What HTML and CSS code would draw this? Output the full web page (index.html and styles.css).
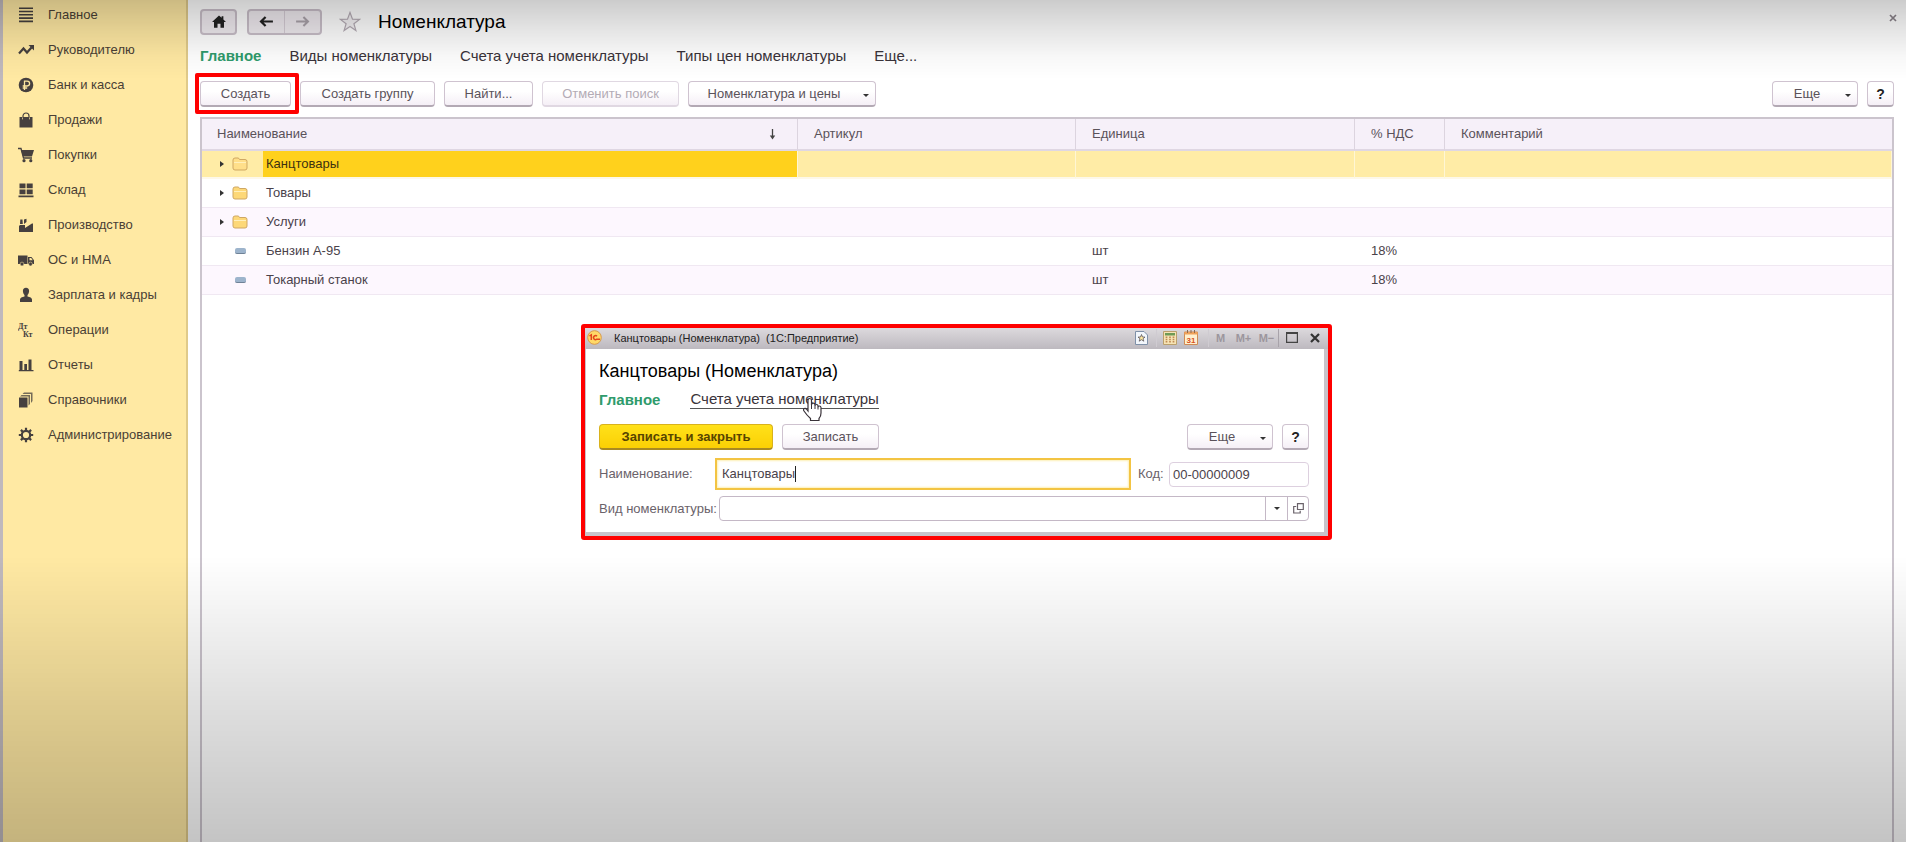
FILE: index.html
```html
<!DOCTYPE html>
<html lang="ru">
<head>
<meta charset="utf-8">
<title>Номенклатура</title>
<link rel="stylesheet" href="styles.css">
</head>
<body>
<div class="app">
  <nav class="sidebar" aria-label="Разделы">
    <a class="section" href="#"><svg class="section-icon" viewBox="0 0 16 16"><path d="M1 1.200h14M1 4.500h14M1 7.800h14M1 11.100h14M1 14.400h14" stroke="currentColor" stroke-width="1.600"/></svg>Главное</a>
    <a class="section" href="#"><svg class="section-icon" viewBox="0 0 16 16"><path d="M1 11.500 5.500 6.500l3.500 4 4.500-5" fill="none" stroke="currentColor" stroke-width="2.200"/><path d="M10.500 3H16v5.500z" fill="currentColor"/></svg>Руководителю</a>
    <a class="section" href="#"><svg class="section-icon" viewBox="0 0 16 16"><circle cx="8" cy="8" r="7.300" fill="currentColor"/><path d="M6.500 13V4.200h2.700a2.300 2.300 0 0 1 0 4.800H4.700M4.700 11h4.500" fill="none" stroke="#fde7a0" stroke-width="1.300"/></svg>Банк и касса</a>
    <a class="section" href="#"><svg class="section-icon" viewBox="0 0 16 16"><path d="M1.500 5H4v2.200h1V5h6v2.200h1V5h2.500v10.500h-13z" fill="currentColor"/><path d="M5 6.500V4a3 3 0 0 1 6 0v2.500" fill="none" stroke="currentColor" stroke-width="1.200"/></svg>Продажи</a>
    <a class="section" href="#"><svg class="section-icon" viewBox="0 0 16 16"><path d="M0 1.500h3L5.500 11H14" fill="none" stroke="currentColor" stroke-width="1.300"/><path d="M3 3h13l-2 6.500H5z" fill="currentColor"/><circle cx="6" cy="13.700" r="1.600" fill="currentColor"/><circle cx="12.800" cy="13.700" r="1.600" fill="currentColor"/></svg>Покупки</a>
    <a class="section" href="#"><svg class="section-icon" viewBox="0 0 16 16"><path d="M1.500 1.500h6v4.800h-6zM8.700 1.500h6v4.800h-6zM1.500 7.400h6v4.800h-6zM8.700 7.400h6v4.800h-6zM.5 13.500h15v1.700H.5z" fill="currentColor"/></svg>Склад</a>
    <a class="section" href="#"><svg class="section-icon" viewBox="0 0 16 16"><path d="M1 15V9l1-1h5v3l7-4.500h1V15zM2 7l.3-4.500h2.200L4.800 7zM6 7V2.500l2.500-.8V5z" fill="currentColor"/></svg>Производство</a>
    <a class="section" href="#"><svg class="section-icon" viewBox="0 0 16 16"><path d="M0 3.500h9.500V12H0zM10 5h3.500L16 8.200V12h-6z" fill="currentColor"/><path d="M11.500 6h1.700l1.500 2.200h-3.200z" fill="#fde7a0"/><circle cx="4" cy="12" r="1.900" fill="currentColor" stroke="#fde7a0" stroke-width=".5"/><circle cx="12.500" cy="12" r="1.900" fill="currentColor" stroke="#fde7a0" stroke-width=".5"/></svg>ОС и НМА</a>
    <a class="section" href="#"><svg class="section-icon" viewBox="0 0 16 16"><path d="M8 .8c2 0 3.300 1.400 3.100 3.400C11 6 10 7.500 9.500 8v1.500c2.500.5 4.500 1.300 4.500 3V15H2v-2.500c0-1.700 2-2.500 4.500-3V8C6 7.500 5 6 4.900 4.200 4.700 2.200 6 .8 8 .8z" fill="currentColor"/></svg>Зарплата и кадры</a>
    <a class="section" href="#"><svg class="section-icon" viewBox="0 0 16 16"><text class="icon-letters" x="0" y="7">Дт</text><text class="icon-letters" x="5" y="15">Кт</text></svg>Операции</a>
    <a class="section" href="#"><svg class="section-icon" viewBox="0 0 16 16"><path d="M1.500 4h3v9h-3zM6.300 7h2.700v6H6.300zM10.500 2.500h3V13h-3zM.8 13H15.500v1.300H.8z" fill="currentColor"/></svg>Отчеты</a>
    <a class="section" href="#"><svg class="section-icon" viewBox="0 0 16 16"><path d="M1 5.500h8.500v10H1z" fill="currentColor"/><path d="M2 4.500 3.500 3H12v9l-1.500 1.500V4.500zM4.500 2 6 .5h8.500V9L13 11V2z" fill="currentColor" opacity=".75"/></svg>Справочники</a>
    <a class="section" href="#"><svg class="section-icon" viewBox="0 0 16 16"><circle cx="8" cy="8" r="4.200" fill="none" stroke="currentColor" stroke-width="2.200"/><path d="M8 .8v3M8 12.200v3M.8 8h3M12.200 8h3M2.900 2.900 5 5M11 11l2.100 2.100M2.900 13.100 5 11M11 5l2.100-2.100" stroke="currentColor" stroke-width="2.200"/></svg>Администрирование</a>
  </nav>

  <main class="page">
    <header class="page-head">
      <button class="tool home" aria-label="Начальная страница"><svg width="14" height="13" viewBox="0 0 16 14"><path d="M8 0 0 7.500h2.300V14h4V9.500h3.400V14h4V7.500H16L13 4.700V1h-2v1.800z" fill="#222"/></svg></button>
      <div class="history">
        <button aria-label="Назад"><svg width="15" height="11" viewBox="0 0 16 12"><path d="M15 6H3M7 1 2 6l5 5" fill="none" stroke="#222" stroke-width="2.400"/></svg></button>
        <button aria-label="Вперед" disabled><svg width="15" height="11" viewBox="0 0 16 12"><path d="M1 6h12M9 1l5 5-5 5" fill="none" stroke="#aaa2aa" stroke-width="2.200"/></svg></button>
      </div>
      <button class="favorite" aria-label="В избранное"><svg width="22" height="21" viewBox="0 0 22 21"><path d="m11 1.500 2.500 6.700 7 .2-5.600 4.300 2 6.800L11 15.500l-5.900 4 2-6.800L1.500 8.400l7-.2z" fill="#f4f2f4" stroke="#b5acb5" stroke-width="1.200"/></svg></button>
      <h1>Номенклатура</h1>
      <button class="close-page" aria-label="Закрыть"><svg width="8" height="8" viewBox="0 0 8 8"><path d="m1 1 6 6M7 1 1 7" stroke="#8b838b" stroke-width="1.700"/></svg></button>
    </header>

    <nav class="tabs" aria-label="Связанные списки">
      <a class="current" href="#">Главное</a>
      <a href="#">Виды номенклатуры</a>
      <a href="#">Счета учета номенклатуры</a>
      <a href="#">Типы цен номенклатуры</a>
      <a href="#">Еще...</a>
    </nav>

    <div class="toolbar">
      <span class="marked"><button class="btn w-create">Создать</button></span>
      <button class="btn w-group">Создать группу</button>
      <button class="btn w-find">Найти...</button>
      <button class="btn w-cancel" disabled>Отменить поиск</button>
      <button class="btn menu w-prices">Номенклатура и цены</button>
      <button class="btn menu more push">Еще</button>
      <button class="btn help" aria-label="Справка">?</button>
    </div>

    <div class="list">
      <table>
        <colgroup><col class="c-name"><col class="c-article"><col class="c-unit"><col class="c-vat"><col></colgroup>
        <thead>
          <tr><th><span class="sorted">Наименование<svg width="7" height="11" viewBox="0 0 7 11"><path d="M3.500 0v8" stroke="#444" stroke-width="1.300"/><path d="M.8 6.500h5.400L3.500 10.500z" fill="#444"/></svg></span></th><th>Артикул</th><th>Единица</th><th>% НДС</th><th>Комментарий</th></tr>
        </thead>
        <tbody>
          <tr class="selected"><td><span class="item"><i class="arrow"></i><svg class="folder" viewBox="0 0 16 14"><path d="M1 3q0-2 2-2h3q1 0 1.500 1.500H13q2 0 2 2V11q0 2-2 2H3q-2 0-2-2z" fill="#ffdf8a" stroke="#cfa763"/><path d="M2 5.500h12" stroke="#fff0bd"/></svg><span class="label">Канцтовары</span></span></td><td></td><td></td><td></td><td></td></tr>
          <tr><td><span class="item"><i class="arrow"></i><svg class="folder" viewBox="0 0 16 14"><path d="M1 3q0-2 2-2h3q1 0 1.500 1.500H13q2 0 2 2V11q0 2-2 2H3q-2 0-2-2z" fill="#fdd878" stroke="#cfa763"/><path d="M2 5.500h12" stroke="#fff0bd"/></svg><span class="label">Товары</span></span></td><td></td><td></td><td></td><td></td></tr>
          <tr><td><span class="item"><i class="arrow"></i><svg class="folder" viewBox="0 0 16 14"><path d="M1 3q0-2 2-2h3q1 0 1.500 1.500H13q2 0 2 2V11q0 2-2 2H3q-2 0-2-2z" fill="#fdd878" stroke="#cfa763"/><path d="M2 5.500h12" stroke="#fff0bd"/></svg><span class="label">Услуги</span></span></td><td></td><td></td><td></td><td></td></tr>
          <tr><td><span class="item"><i class="dash"></i><span class="label">Бензин А-95</span></span></td><td></td><td>шт</td><td>18%</td><td></td></tr>
          <tr><td><span class="item"><i class="dash"></i><span class="label">Токарный станок</span></span></td><td></td><td>шт</td><td>18%</td><td></td></tr>
        </tbody>
      </table>
    </div>
  </main>
</div>

<div class="shade"></div>

<section class="dialog" role="dialog" aria-labelledby="dialog-title">
  <div class="titlebar">
    <svg class="logo" width="15" height="15" viewBox="0 0 15 15"><circle cx="7.500" cy="7.500" r="6.800" fill="#ffd968" stroke="#d99a4a"/><path d="m2.500 6 1.800-1.200V10M10 6.200a2 2 0 1 0-.2 3H13" fill="none" stroke="#e2451c" stroke-width="1.500"/></svg>
    <span class="caption">Канцтовары (Номенклатура)&nbsp; (1С:Предприятие)</span>
    <div class="tools">
      <button class="t-fav" aria-label="Избранное"><svg width="13" height="14" viewBox="0 0 13 14"><path d="M.5.5H9L12.500 4v9.500H.5z" fill="#f2f6fb" stroke="#7f90a8"/><path d="m6.500 3.500 1 2.500 2.500.1-2 1.600.8 2.500-2.300-1.500-2.300 1.500.8-2.500-2-1.600L5.500 6z" fill="#ffe9a0" stroke="#5b5560" stroke-width=".8"/></svg></button>
      <button class="t-calc" aria-label="Калькулятор"><svg width="14" height="14" viewBox="0 0 14 14"><path d="M.5.5h13v13H.5z" fill="#f6e3b4" stroke="#bba06c"/><path d="M2 2h10v2.500H2z" fill="#6f9a55"/><path d="M3.500 5.500V12M7 5.500V12M10.500 5.500V12" stroke="#c08a55" stroke-width="1.700" stroke-dasharray="1.600 .6"/></svg></button>
      <button class="t-date" aria-label="Календарь"><svg width="14" height="15" viewBox="0 0 14 15"><path d="M.5 2h13v12.500H.5z" fill="#fff0cf" stroke="#d08b55"/><path d="M.5 2h13v2.500H.5z" fill="#f0a25b"/><path d="M3.500 0v3M7 0v3M10.500 0v3" stroke="#8d6a50"/><text class="day" x="7" y="13" text-anchor="middle">31</text></svg></button>
      <button class="mem" disabled>M</button><button class="mem" disabled>M+</button><button class="mem" disabled>M−</button>
      <button class="t-max" aria-label="Развернуть"><svg width="12" height="11" viewBox="0 0 12 11"><path d="M.6 1h10.800v9.400H.6z" fill="none" stroke="#444" stroke-width="1.200"/><path d="M0 1h12" stroke="#444" stroke-width="2"/></svg></button>
      <button class="t-close" aria-label="Закрыть"><svg width="10" height="10" viewBox="0 0 10 10"><path d="m1 1 8 8M9 1 1 9" stroke="#333" stroke-width="2.200"/></svg></button>
    </div>
  </div>
  <form class="dialog-body">
    <h2 id="dialog-title">Канцтовары (Номенклатура)</h2>
    <nav class="tabs" aria-label="Разделы карточки">
      <a class="current" href="#">Главное</a>
      <a class="hovered" href="#">Счета учета номенклатуры</a>
    </nav>
    <div class="toolbar">
      <button type="button" class="btn primary">Записать и закрыть</button>
      <button type="button" class="btn w-write">Записать</button>
      <button type="button" class="btn menu more push">Еще</button>
      <button type="button" class="btn help" aria-label="Справка">?</button>
    </div>
    <div class="field-row">
      <label class="l-name" for="name">Наименование:</label>
      <div class="focused"><input id="name" type="text" value="Канцтовары"><i class="caret"></i></div>
      <label class="l-code" for="code">Код:</label>
      <input class="code" id="code" type="text" value="00-00000009">
    </div>
    <div class="field-row">
      <label class="l-kind" for="kind">Вид номенклатуры:</label>
      <div class="combo">
        <select id="kind"><option></option></select>
        <button type="button" aria-label="Открыть"><svg width="11" height="11" viewBox="0 0 11 11"><path d="M4.500.7h5.800v5.800H4.500zM3.200 3.500H.7v6.500h6.500V7.800" fill="none" stroke="#6a626a" stroke-width="1.200"/></svg></button>
      </div>
    </div>
  </form>
  <svg class="pointer" width="22" height="26" viewBox="0 0 22 26"><path d="M6 3.500q0-2 1.700-2t1.800 2V8q0-1.800 1.700-1.800T13 8v1q0-1.500 1.500-1.500T16 9v1.200q0-1.200 1.400-1.200T19 10.500V16q0 3.500-2 5.500v2H8.500v-2Q5 18.500 2 14q-1-1.800.3-2.500 1.300-.6 2.500 1L6 14z" fill="#fff" stroke="#3a333a" stroke-width="1.200"/><path d="M9.500 8v4M13 9v3M16 10v2.500" stroke="#3a333a"/></svg>
</section>
</body>
</html>
```

FILE: styles.css
```css
* { box-sizing: border-box; }

body {
  margin: 0;
  background: #fff;
  color: #4a424a;
  font-family: "Liberation Sans", Arial, sans-serif;
  font-size: 13px;
  line-height: 16px;
}

button, input, select { font: inherit; color: inherit; }
button { padding: 0; border: 0; background: none; }
a { color: inherit; text-decoration: none; }
svg { flex: none; }

.app { display: flex; min-height: 100vh; }

/* Sections panel */
.sidebar {
  flex: none;
  display: flex;
  flex-direction: column;
  gap: 15px;
  width: 188px;
  padding: 5px 0 0 15px;
  background: #ffe9a3;
  border-left: 3px solid #c0b9bd;
  border-right: 2px solid #e0ca8a;
  color: #4a3f35;
}
.section { display: flex; align-items: center; gap: 14px; height: 20px; }
.section-icon { width: 16px; height: 16px; color: #46403f; }
.icon-letters { font: bold 8px "Liberation Serif", serif; fill: currentColor; }

/* Page */
.page { flex: 1; min-width: 0; display: flex; flex-direction: column; padding: 8px 12px 0 12px; }
.page-head { display: flex; align-items: center; height: 27px; }
.page-head h1 { margin: 0 auto 0 17px; color: #000; font-size: 19px; font-weight: normal; line-height: 24px; }
.tool, .history {
  height: 26px;
  border: 2px solid #c9bfc9;
  border-radius: 4px;
  background: #f0ebf0;
}
.tool, .history, .history button { display: flex; align-items: center; justify-content: center; }
.home { width: 37px; }
.history { width: 75px; margin-left: 10px; }
.history button { flex: 1; height: 100%; }
.history button + button { border-left: 1px solid #d5ccd5; }
.favorite { display: flex; margin-left: 17px; }
.close-page { display: flex; align-self: flex-start; padding: 6px 0 0; margin-right: -3px; }

.tabs { display: flex; gap: 28px; color: #3a333a; font-size: 15px; line-height: 18px; }
.page > .tabs { margin-top: 12px; }
.tabs .current { color: #2f9b6c; font-weight: bold; }
.tabs .hovered { border-bottom: 1px solid #555; line-height: 16px; }

.toolbar { display: flex; gap: 9px; }
.page > .toolbar { margin-top: 16px; }
.push { margin-left: auto; }
.btn {
  height: 26px;
  border: 1px solid #cfc3d0;
  border-bottom: 2px solid #b3a9b4;
  border-radius: 4px;
  background: linear-gradient(#fff 40%, #f5eff6);
  color: #5a525a;
}
.btn:disabled { color: #b3abb5; border-color: #e0d8e2; }
.w-create { width: 91px; }
.w-group { width: 135px; }
.w-find { width: 89px; }
.w-cancel { width: 137px; }
.w-prices { width: 188px; }
.w-write { width: 97px; }
.more { width: 86px; }
.help { width: 27px; color: #222; font-weight: bold; font-size: 14px; }
.menu { display: flex; align-items: center; justify-content: center; position: relative; padding-right: 16px; }
.menu::after {
  content: "";
  position: absolute;
  right: 6px;
  top: 12px;
  border: 3px solid transparent;
  border-top-color: #333;
  border-bottom: 0;
}
.marked { position: relative; display: flex; }
.marked::after {
  content: "";
  position: absolute;
  inset: -8px -8px -7px -5px;
  border: 4px solid #f00;
  border-radius: 2px;
}

/* List */
.list { flex: 1; margin-top: 10px; border: 2px solid #cbc4cd; border-bottom: 0; }
table { width: 100%; border-collapse: separate; border-spacing: 0; table-layout: fixed; }
.c-name { width: 596px; }
.c-article { width: 278px; }
.c-unit { width: 279px; }
.c-vat { width: 90px; }
th, td { padding: 0 16px; text-align: left; font-weight: normal; }
th {
  height: 32px;
  background: #f6f0f9;
  border-right: 1px solid #dcd4df;
  border-bottom: 2px solid #dfd7e3;
  color: #5a525a;
}
th:last-child { border-right: 0; }
.sorted { display: flex; justify-content: space-between; align-items: center; padding-right: 5px; }
td { height: 29px; border-bottom: 1px solid #f0e8f2; }
th:first-child { padding-left: 15px; }
td:first-child { padding: 0; }
tbody tr:nth-child(odd) td { background: #fdf7fe; }
tbody .selected td, tbody tr.selected:nth-child(odd) td {
  height: 28px;
  background: #ffeca6;
  border-right: 1px solid #fff6d4;
  border-bottom: 2px solid #fdf8ea;
}
.item { display: flex; align-items: center; height: 26px; padding-left: 18px; }
.arrow { width: 0; height: 0; margin-right: 8px; border: 3px solid transparent; border-left: 4px solid #333; border-right: 0; }
.folder { width: 16px; height: 14px; margin-right: 15px; }
.dash { width: 11px; height: 6px; margin: 0 17px 0 15px; border-radius: 2px; background: #9db4cc; border-bottom: 1px solid #6f8297; }
.label { flex: 1; line-height: 26px; padding-left: 3px; }
.selected .label { background: #ffd11c; color: #3d3110; }

/* Darkening of the workspace edges behind the active dialog */
.shade {
  position: fixed;
  inset: 0;
  pointer-events: none;
  background: linear-gradient(rgba(0, 0, 0, .2), rgba(0, 0, 0, .11) 28px, rgba(0, 0, 0, .03) 56px, transparent 80px, transparent 66%, rgba(0, 0, 0, .035) 71%, rgba(0, 0, 0, .13) 84%, rgba(0, 0, 0, .23));
}

/* Item dialog */
.dialog {
  position: absolute;
  left: 581px;
  top: 324px;
  width: 751px;
  border: 4px solid #f00;
  border-radius: 3px;
  background: #fff;
}
.titlebar {
  display: flex;
  align-items: center;
  height: 21px;
  padding: 0 3px 2px 2px;
  background: linear-gradient(#dcd9dd, #bdb9bf);
  color: #222;
  font-size: 11px;
}
.caption { margin-left: 12px; }
.tools { display: flex; align-items: center; margin-left: auto; height: 18px; }
.tools button { display: flex; align-items: center; justify-content: center; height: 18px; }
.tools .t-fav { margin-right: 8px; }
.tools .t-calc { width: 22px; padding-left: 4px; border-left: 1px solid #cfcbd1; }
.tools .t-date { width: 31px; padding-right: 4px; border-right: 1px solid #cfcbd1; }
.tools .mem { width: 23px; color: #9c969d; font-weight: bold; }
.tools .t-max { width: 27px; border-left: 1px solid #a8a3aa; }
.tools .t-close { width: 20px; }
.day { font: bold 8px "Liberation Sans", sans-serif; fill: #d8501e; }
.dialog-body { padding: 9px 15px 7px 13px; border: solid #c8c3ca; border-width: 0 4px 4px 1px; }
.dialog-body h2 { margin: 0; color: #000; font-size: 18px; font-weight: normal; line-height: 26px; }
.dialog-body .tabs { gap: 30px; margin-top: 7px; }
.dialog-body .toolbar { margin-top: 15px; }
.btn.primary {
  width: 174px;
  border-color: #d9b21c;
  border-bottom-color: #a98a22;
  background: linear-gradient(#ffe11a, #fbd004);
  color: #574400;
  font-weight: bold;
}
.field-row { display: flex; align-items: center; height: 33px; color: #6a626a; }
.dialog-body .toolbar + .field-row { margin-top: 6px; height: 36px; }
.l-name { width: 116px; }
.focused { flex: 1; display: flex; position: relative; height: 32px; border: 2px solid #f3c443; box-shadow: inset 0 0 2px 1px #fdf0b8; }
.focused input { flex: 1; min-width: 0; padding: 0 5px; border: 0; outline: 0; background: transparent; color: #4a424a; }
.caret { position: absolute; left: 78px; top: 6px; width: 1px; height: 16px; background: #222; }
.l-code { width: 38px; padding-left: 7px; }
.code { width: 140px; height: 25px; padding: 0 3px; border: 1px solid #ddd0df; border-radius: 4px; color: #4a424a; }
.l-kind { width: 120px; white-space: nowrap; }
.combo { flex: 1; display: flex; position: relative; height: 25px; border: 1px solid #c4b8c6; border-radius: 4px; }
.combo select { flex: 1; min-width: 0; appearance: none; border: 0; background: transparent; }
.combo button { display: flex; align-items: center; justify-content: center; width: 21px; border-left: 1px solid #c4b8c6; }
.combo::after {
  content: "";
  position: absolute;
  right: 28px;
  top: 10px;
  border: 3px solid transparent;
  border-top-color: #333;
  border-bottom: 0;
}
.combo::before { content: ""; position: absolute; right: 42px; top: 0; bottom: 0; border-left: 1px solid #c4b8c6; }
.pointer { position: absolute; left: 217px; top: 69px; }
```
